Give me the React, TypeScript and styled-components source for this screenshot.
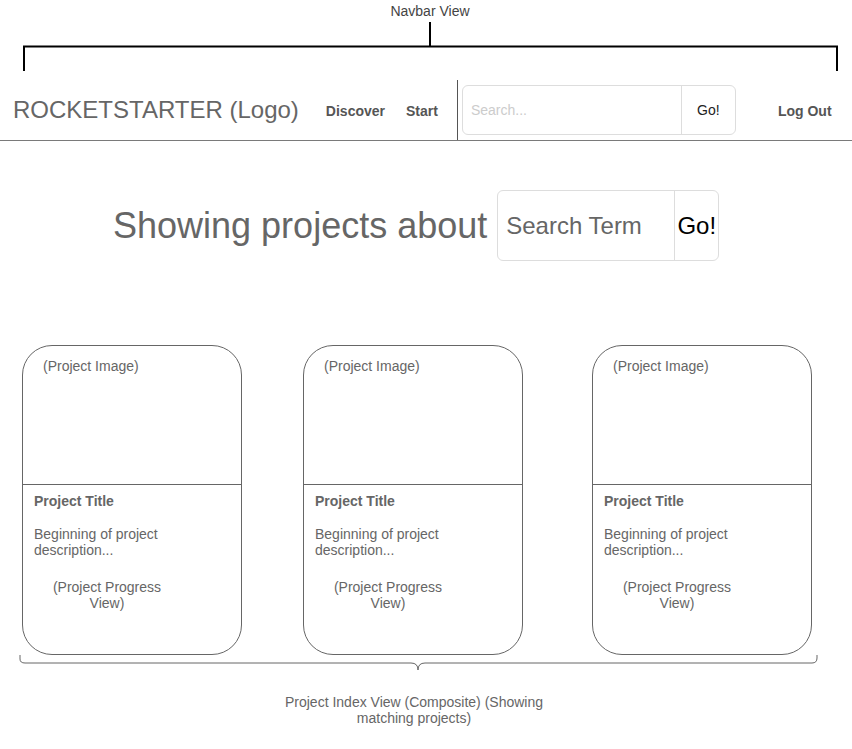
import React from 'react';
import styled, { createGlobalStyle } from 'styled-components';

const GlobalStyle = createGlobalStyle`
  html, body {
    margin: 0;
    padding: 0;
    background: #ffffff;
  }

  body {
    font-family: 'Liberation Sans', Arial, Helvetica, sans-serif;
    color: #666666;
  }

  * {
    box-sizing: border-box;
  }
`;

const Canvas = styled.div`
  width: 852px;
  height: 749px;
  position: relative;
  overflow: hidden;
`;

const NoteLabel = styled.div`
  font-size: 14px;
  line-height: 16px;
  color: #444444;
  text-align: center;
  padding: 3px 0 0 8px;
  height: 20px;
`;

const NoteSvg = styled.svg`
  display: block;
`;

const Navbar = styled.nav`
  height: 61px;
  display: flex;
  align-items: center;
  border-bottom: 1px solid #7a7a7a;
  padding-left: 13px;
`;

const Logo = styled.div`
  font-size: 24px;
  color: #666666;
  margin-right: 27px;
  white-space: nowrap;
`;

const NavLink = styled.a<{ $gap?: number }>`
  font-size: 14px;
  font-weight: 700;
  color: #555555;
  text-decoration: none;
  margin-right: ${(p) => p.$gap ?? 0}px;
  padding-top: 2px;
`;

const Divider = styled.div`
  align-self: stretch;
  width: 1px;
  background: #555555;
  margin-right: 4px;
`;

const SearchBox = styled.div<{ $w: number; $h: number; $go: number }>`
  display: flex;
  width: ${(p) => p.$w}px;
  height: ${(p) => p.$h}px;
  border: 1px solid #dddddd;
  border-radius: 6px;
  overflow: hidden;

  .field {
    flex: 1;
    display: flex;
    align-items: center;
  }

  .go {
    width: ${(p) => p.$go}px;
    border-left: 1px solid #dddddd;
    display: flex;
    align-items: center;
    justify-content: center;
  }
`;

const NavField = styled.span`
  font-size: 14px;
  color: #cccccc;
  padding-left: 8px;
`;

const NavGo = styled.span`
  font-size: 14px;
  color: #222222;
`;

const LogOut = styled(NavLink)`
  margin-left: 42px;
`;

const Hero = styled.section`
  display: flex;
  align-items: center;
  padding-left: 113px;
  margin-top: 49px;
`;

const Headline = styled.h1`
  margin: 0 10px 0 0;
  font-size: 36px;
  font-weight: 400;
  color: #666666;
  white-space: nowrap;
`;

const TermField = styled.span`
  font-size: 24px;
  color: #666666;
  padding-left: 8px;
`;

const TermGo = styled.span`
  font-size: 24px;
  color: #000000;
`;

const CardRow = styled.section`
  display: flex;
  padding-left: 22px;
  margin-top: 84px;
`;

const Card = styled.article<{ $offset: number }>`
  width: 220px;
  height: 310px;
  margin-left: ${(p) => p.$offset}px;
  border: 1px solid #666666;
  border-radius: 30px;
  overflow: hidden;
  display: flex;
  flex-direction: column;
  font-size: 14px;
  line-height: 16px;
  color: #666666;
`;

const ImageArea = styled.div`
  height: 139px;
  border-bottom: 1px solid #666666;
  padding: 12px 0 0 20px;
`;

const CardBody = styled.div`
  padding: 8px 11px 0;
`;

const Title = styled.div`
  font-weight: 700;
`;

const Description = styled.p`
  margin: 17px 0 0;
  width: 190px;
`;

const Progress = styled.div`
  margin: 21px 0 0;
  width: 146px;
  text-align: center;
`;

const IndexLabel = styled.div`
  width: 280px;
  margin: 21px 0 0 274px;
  text-align: center;
  font-size: 14px;
  line-height: 16px;
  color: #666666;
`;

const offsets = [0, 61, 69];

const App: React.FC = () => {
  return (
    <>
      <GlobalStyle />
      <Canvas>
        <NoteLabel>Navbar View</NoteLabel>
        <NoteSvg width="852" height="60" viewBox="0 0 852 60">
          <g stroke="#000000" strokeWidth="2" fill="none">
            <line x1="430" y1="2" x2="430" y2="27" />
            <polyline points="24,51 24,26.5 837,26.5 837,51" />
          </g>
        </NoteSvg>

        <Navbar>
          <Logo>ROCKETSTARTER (Logo)</Logo>
          <NavLink $gap={21}>Discover</NavLink>
          <NavLink $gap={19}>Start</NavLink>
          <Divider />
          <SearchBox $w={274} $h={50} $go={54}>
            <div className="field">
              <NavField>Search...</NavField>
            </div>
            <div className="go">
              <NavGo>Go!</NavGo>
            </div>
          </SearchBox>
          <LogOut>Log Out</LogOut>
        </Navbar>

        <Hero>
          <Headline>Showing projects about</Headline>
          <SearchBox $w={222} $h={71} $go={44}>
            <div className="field">
              <TermField>Search Term</TermField>
            </div>
            <div className="go">
              <TermGo>Go!</TermGo>
            </div>
          </SearchBox>
        </Hero>

        <CardRow>
          {offsets.map((o, i) => (
            <Card key={i} $offset={o}>
              <ImageArea>(Project Image)</ImageArea>
              <CardBody>
                <Title>Project Title</Title>
                <Description>Beginning of project description...</Description>
                <Progress>(Project Progress View)</Progress>
              </CardBody>
            </Card>
          ))}
        </CardRow>

        <NoteSvg width="852" height="18" viewBox="0 0 852 18">
          <path
            d="M20 0 L20 4 Q20 8 25 8 L411 8 Q418 8 418 15 Q418 8 425 8 L812 8 Q817 8 817 3 L817 0"
            stroke="#666666"
            strokeWidth="1"
            fill="none"
          />
        </NoteSvg>
        <IndexLabel>Project Index View (Composite) (Showing matching projects)</IndexLabel>
      </Canvas>
    </>
  );
};

export default App;
